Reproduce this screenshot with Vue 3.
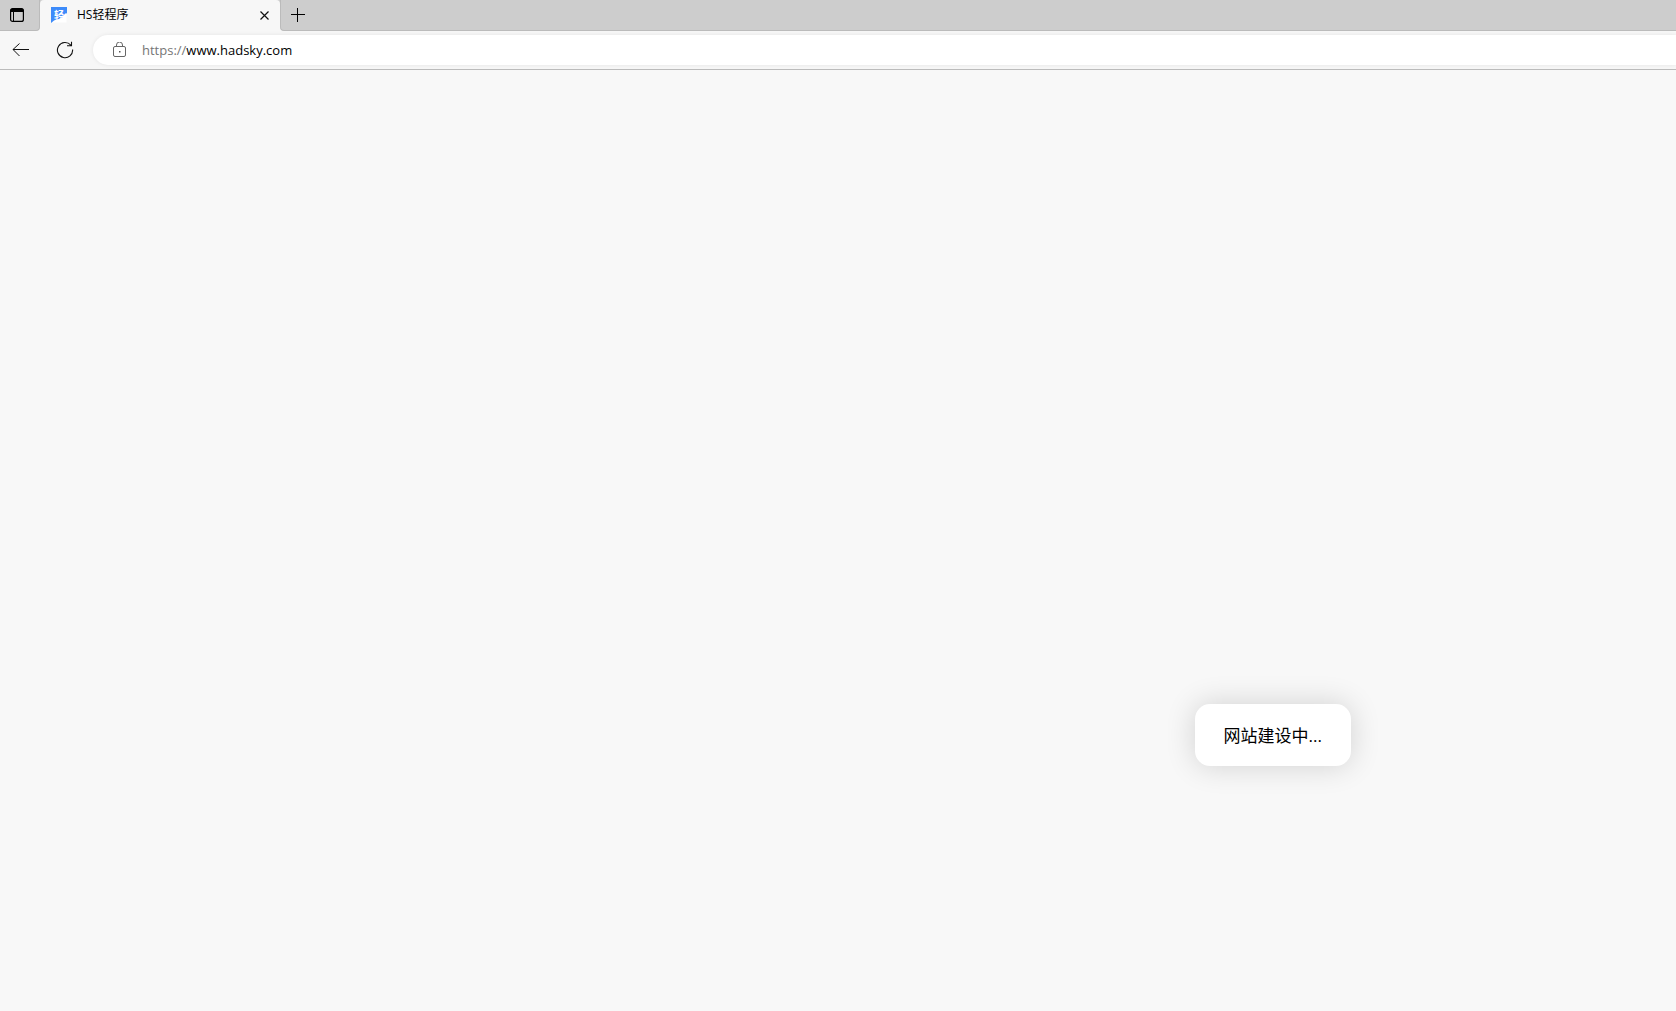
<template>
  <div class="browser">
    <header class="tab-strip">
      <div class="strip strip--start">
        <button class="icon-btn" type="button" aria-label="Tab actions">
          <svg width="14" height="14" viewBox="0 0 14 14">
            <rect x="0.6" y="0.6" width="12.8" height="12.8" rx="2" fill="none" stroke="#000" stroke-width="1.2" />
            <path d="M0.5 2.5a2 2 0 0 1 2-2h9a2 2 0 0 1 2 2V4H0.5z" fill="#000" />
            <path d="M3.5 4v9.5" stroke="#000" stroke-width="1" />
          </svg>
        </button>
      </div>

      <div class="tab-slot">
        <div class="tab">
          <svg class="tab__logo" width="16" height="16" viewBox="0 0 16 16">
            <path d="M1 15.500L15.500 5.500V15.500z" fill="#fff" />
            <path d="M0 0h16v6.500Q14 5.800 13 8Q11 8.500 11 11Q8.500 10.500 7.500 12.500Q5 12 3 13.500L0 16z" fill="#3d8bfa" />
            <text class="tab__glyph" x="8" y="12" text-anchor="middle">轻</text>
          </svg>
          <span class="tab__title">{{ tabTitle }}</span>
          <button class="icon-btn tab__close" type="button" aria-label="Close tab">
            <svg width="9" height="9" viewBox="0 0 9 9">
              <path d="M0.5 0.5l8 8M8.5 0.5l-8 8" stroke="#111" stroke-width="1.2" />
            </svg>
          </button>
        </div>
      </div>

      <div class="strip strip--end">
        <button class="icon-btn" type="button" aria-label="New tab">
          <svg width="14" height="14" viewBox="0 0 14 14">
            <path d="M6.5 0v14M0 6.5h14" stroke="#000" stroke-width="1" />
          </svg>
        </button>
      </div>
    </header>

    <nav class="toolbar">
      <button class="icon-btn toolbar__back" type="button" aria-label="Back">
        <svg width="17" height="14" viewBox="0 0 17 14">
          <path d="M7.5 0.5L1 6.500l6.500 6.500M1 6.500h16" fill="none" stroke="#111" stroke-width="1" />
        </svg>
      </button>
      <button class="icon-btn toolbar__reload" type="button" aria-label="Reload">
        <svg width="18" height="18" viewBox="0 0 18 18">
          <path d="M16.6 8.500A7.600 7.600 0 1 1 14.800 4.200M15.500 0.800v4h-4.500" fill="none" stroke="#111" stroke-width="1.100" />
        </svg>
      </button>
      <div class="address">
        <svg width="13" height="16" viewBox="0 0 13 16">
          <rect x="0.500" y="4.500" width="12" height="10" rx="1.500" fill="none" stroke="#666" />
          <path d="M3.500 4.500V3a2.500 2.500 0 0 1 6 0v1.500" fill="none" stroke="#666" />
          <rect x="6" y="9" width="1.500" height="1.500" fill="#555" />
        </svg>
        <a class="address__url" :href="scheme + host"><span class="address__scheme">{{ scheme }}</span>{{ host }}</a>
      </div>
    </nav>

    <main class="page">
      <div class="notice" role="status">网站建设中...</div>
    </main>
  </div>
</template>

<script setup>
const tabTitle = 'HS轻程序'
const scheme = 'https://'
const host = 'www.hadsky.com'
</script>

<style>
body {
  background: #f8f8f8;
}
</style>

<style scoped>
.browser {
  display: flex;
  flex-direction: column;
  min-height: 100vh;
  background: #f8f8f8;
  color: #000;
  font-family: 'Open Sans', 'Noto Sans CJK SC', sans-serif;
}

.icon-btn {
  display: flex;
  align-items: center;
  justify-content: center;
  flex: none;
  padding: 0;
  border: 0;
  background: none;
  cursor: pointer;
}

.tab-strip {
  display: flex;
  height: 31px;
  background: #f7f7f7;
}
.strip {
  display: flex;
  align-items: center;
  box-sizing: border-box;
  background: #cdcdcd;
  border-bottom: 1px solid #bbb;
}
.strip--start {
  width: 40px;
  padding-left: 10px;
  border-right: 1px solid #bbb;
  border-bottom-right-radius: 4px;
}
.strip--end {
  flex: 1;
  padding-left: 10px;
  border-left: 1px solid #bbb;
  border-bottom-left-radius: 4px;
}

/* the grey shows through behind the tab's rounded top corners */
.tab-slot {
  width: 240px;
  background: linear-gradient(#cdcdcd 4px, #f7f7f7 4px);
}
.tab {
  display: flex;
  align-items: center;
  box-sizing: border-box;
  height: 30px;
  padding: 0 11px;
  background: #f7f7f7;
  border-radius: 4px 4px 0 0;
}
.tab__logo {
  flex: none;
}
.tab__glyph {
  fill: #fff;
  font-family: 'Noto Sans CJK SC', sans-serif;
  font-size: 10px;
  font-weight: 700;
}
.tab__title {
  flex: 1;
  margin-left: 10px;
  font-size: 12px;
  line-height: 16px;
}

.toolbar {
  display: flex;
  align-items: center;
  height: 38px;
  background: #f7f7f7;
  border-bottom: 1px solid #bbb;
}
.toolbar__back {
  width: 41px;
}
.toolbar__reload {
  width: 48px;
}
.address {
  display: flex;
  align-items: center;
  flex: 1;
  height: 30px;
  margin-left: 4px;
  padding-left: 20px;
  background: #fff;
  border-radius: 15px 0 0 15px;
  box-shadow: 0 0 4px rgba(0, 0, 0, 0.08);
}
.address__url {
  margin-left: 16px;
  color: #000;
  font-size: 13px;
  text-decoration: none;
}
.address__scheme {
  color: #767676;
}

.page {
  display: flex;
  flex: 1;
  align-items: flex-end;
  justify-content: flex-end;
  padding: 0 325px 245px 0;
}
.notice {
  padding: 20px 29px 18px;
  background: #fff;
  border-radius: 15px;
  box-shadow: 0 0 30px rgba(0, 0, 0, 0.16);
  font-size: 17px;
  line-height: 24px;
}
</style>
